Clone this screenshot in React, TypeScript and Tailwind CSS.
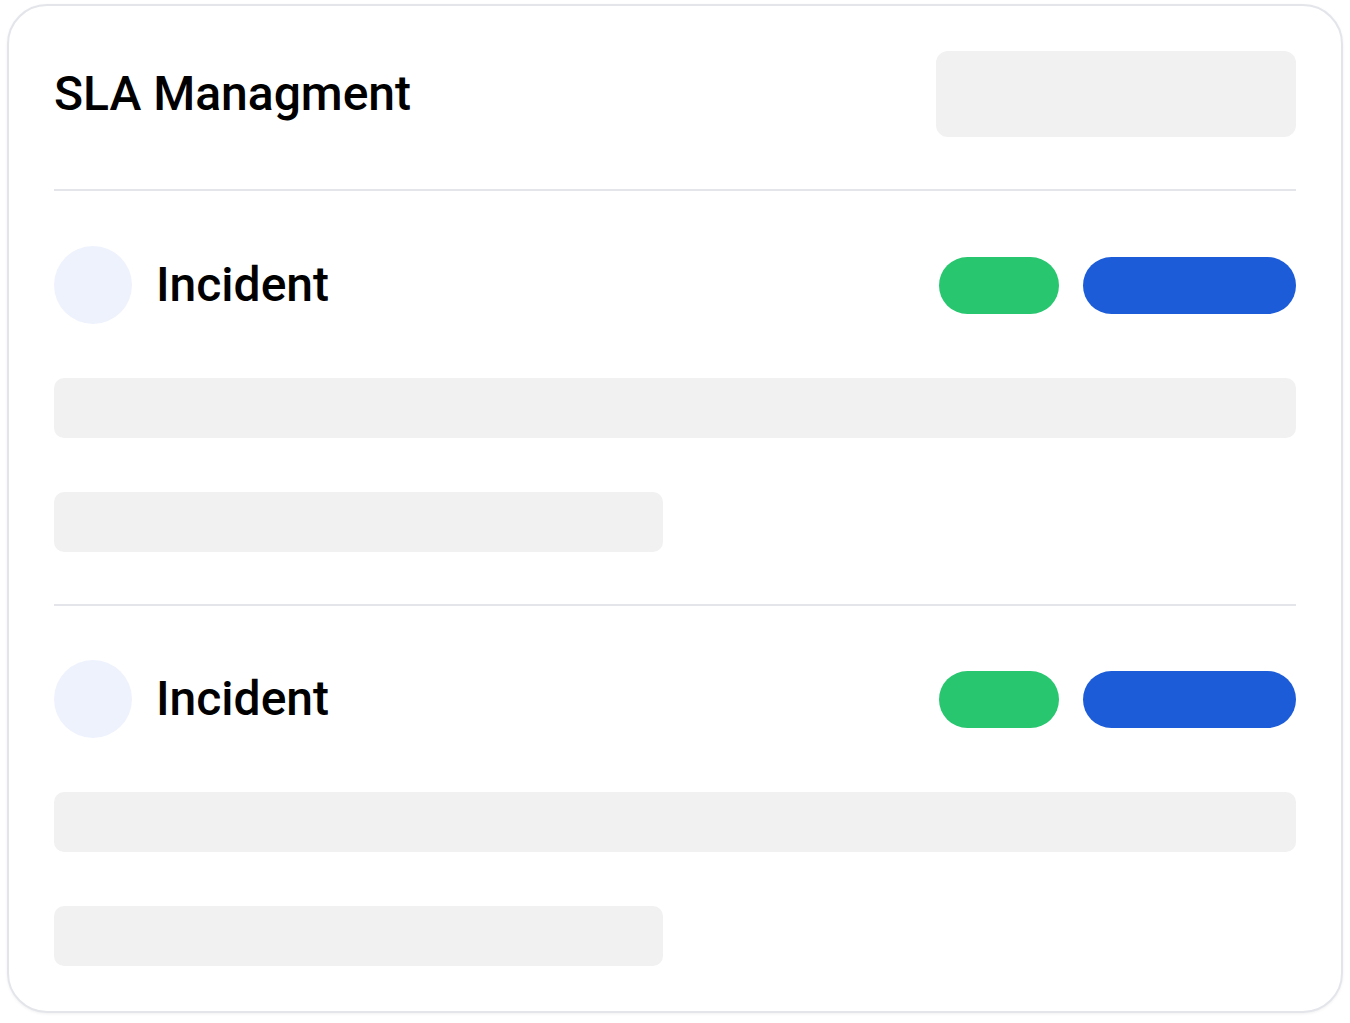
const Skeleton = ({ className }: { className: string }) => (
  <div className={`rounded-[10px] bg-[#f1f1f1] ${className}`} />
);

const IncidentBlock = () => (
  <div className="flex flex-col">
    <div className="flex h-[78px] items-center">
      <div className="h-[78px] w-[78px] rounded-full bg-[#eef2fc]" />
      <span className="ml-[24px] text-[48px] font-medium leading-none text-black">Incident</span>
      <div className="ml-auto flex items-center gap-6">
        <div className="h-[57px] w-[120px] rounded-full bg-[#29c670]" />
        <div className="h-[57px] w-[213px] rounded-full bg-[#1c5cd8]" />
      </div>
    </div>
    <Skeleton className="mt-[54px] h-[60px] w-full" />
    <Skeleton className="mt-[54px] h-[60px] w-[609px]" />
  </div>
);

export default function App() {
  return (
    <div className="min-h-screen bg-white px-[7px] pt-[4px]" style={{ fontFamily: "Roboto, 'Noto Sans', sans-serif" }}>
      <div className="rounded-[40px] border-2 border-[#e3e5ea] bg-white px-[45px] pt-[45px] pb-[45px] shadow-[0_1px_3px_rgba(0,0,0,0.06)]">
        <div className="flex h-[86px] items-center">
          <h1 className="text-[48px] font-medium leading-none text-black">SLA Managment</h1>
          <Skeleton className="ml-auto h-[86px] w-[360px] rounded-[12px]" />
        </div>
        <div className="mt-[52px] h-[2px] bg-[#e3e5ea]" />
        <div className="mt-[55px]">
          <IncidentBlock />
        </div>
        <div className="mt-[52px] h-[2px] bg-[#e3e5ea]" />
        <div className="mt-[54px]">
          <IncidentBlock />
        </div>
      </div>
    </div>
  );
}
